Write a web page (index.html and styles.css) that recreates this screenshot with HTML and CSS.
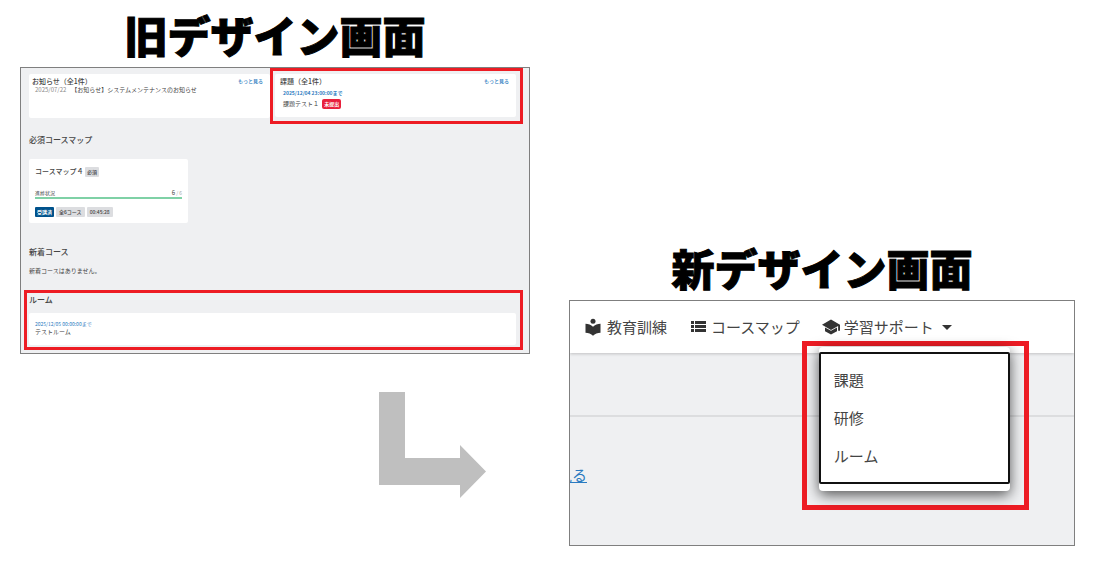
FILE: index.html
```html
<!DOCTYPE html>
<html lang="ja">
<head>
  <meta charset="UTF-8">
  <meta name="viewport" content="width=device-width, initial-scale=1.0">
  <title>旧デザイン画面 / 新デザイン画面</title>
  <link rel="stylesheet" href="styles.css">
</head>
<body>
  <main class="compare">

    <!-- 旧デザイン -->
    <section class="side">
      <h1 class="title">旧デザイン画面</h1>
      <div class="screen old">
        <div class="top-row">
          <div class="top-cell">
            <div class="card notice">
              <div class="card-head">
                <h2>お知らせ（全1件）</h2>
                <a href="#">もっと見る</a>
              </div>
              <p class="news"><time>2025/07/22</time><span>【お知らせ】システムメンテナンスのお知らせ</span></p>
            </div>
          </div>
          <div class="top-cell marked">
            <div class="card notice">
              <div class="card-head">
                <h2>課題（全1件）</h2>
                <a href="#">もっと見る</a>
              </div>
              <p class="limit">2025/12/04 23:00:00まで</p>
              <p class="task">課題テスト１ <span class="tag tag-red">未提出</span></p>
            </div>
          </div>
        </div>

        <section class="block">
          <h2 class="block-title">必須コースマップ</h2>
          <div class="card course">
            <h3>コースマップ４ <span class="tag">必須</span></h3>
            <div class="progress-head">
              <span>進捗状況</span>
              <span class="count">6<small> / 6</small></span>
            </div>
            <div class="bar"></div>
            <div class="tags">
              <span class="tag tag-blue">受講済</span>
              <span class="tag">全6コース</span>
              <span class="tag">00:45:28</span>
            </div>
          </div>
        </section>

        <section class="block new-course">
          <h2 class="block-title">新着コース</h2>
          <p>新着コースはありません。</p>
        </section>

        <section class="room marked">
          <h2 class="block-title">ルーム</h2>
          <div class="card">
            <p class="room-limit">2025/12/05 00:00:00まで</p>
            <p>テストルーム</p>
          </div>
        </section>
      </div>

      <svg class="arrow" width="108" height="108" viewBox="0 0 108 108" aria-hidden="true">
        <path fill="#bfbfbf" d="M0 0h26v66h55V53l26 26.500L81 106V93H0z"/>
      </svg>
    </section>

    <!-- 新デザイン -->
    <section class="side side-new">
      <h1 class="title">新デザイン画面</h1>
      <div class="screen new">
        <nav class="nav">
          <a href="#">
            <svg width="20" height="20" viewBox="0 0 24 24"><path d="M12 11.550C9.640 9.350 6.480 8 3 8v11c3.480 0 6.640 1.350 9 3.550 2.360-2.190 5.520-3.550 9-3.550V8c-3.480 0-6.640 1.350-9 3.550z"/><circle cx="12" cy="5" r="3"/></svg>
            教育訓練
          </a>
          <a href="#">
            <svg width="18" height="18" viewBox="0 0 18 18"><path d="M2 3h3v3H2zM6 3h11v3H6zM2 7h3v3H2zM6 7h11v3H6zM2 11h3v3H2zM6 11h11v3H6z"/></svg>
            コースマップ
          </a>
          <div class="nav-item">
            <button type="button" class="nav-button" aria-expanded="true">
              <svg width="18" height="18" viewBox="0 0 24 24"><path d="M4 12.500v5L12 22l8-4.500v-5L12 17zM12 2L0 9l12 7 9.500-5.500V17H24V9z"/></svg>
              学習サポート
              <span class="caret"></span>
            </button>
            <div class="menu-mark">
              <div class="menu">
                <ul>
                  <li><a href="#">課題</a></li>
                  <li><a href="#">研修</a></li>
                  <li><a href="#">ルーム</a></li>
                </ul>
              </div>
            </div>
          </div>
        </nav>
        <div class="page">
          <hr>
          <a class="more" href="#">見る</a>
        </div>
      </div>
    </section>

  </main>
</body>
</html>
```

FILE: styles.css
```css
* {
  box-sizing: border-box;
}

body {
  margin: 0;
  background: #fff;
  color: #444;
  font-family: "Noto Sans CJK JP", sans-serif;
}

h1, h2, h3, p, ul {
  margin: 0;
  padding: 0;
}

a {
  color: #2a7ac0;
  text-decoration: none;
}

.compare {
  display: grid;
  grid-template-columns: 510fr 506fr;
  gap: 39px;
  padding: 0 21px 0 20px;
}

.side {
  padding-top: 4px;
}

.side-new {
  padding-top: 237px;
}

.title {
  padding-bottom: 3px;
  text-align: center;
  font-size: 43px;
  font-weight: 900;
  line-height: 60px;
  color: #000;
  -webkit-text-stroke: 1px #000;
}

.screen {
  border: 1px solid #7f7f7f;
  background: #eff0f2;
  overflow: hidden;
}

.marked {
  border: 3px solid #ed1c24;
}

.card {
  background: #fff;
  border-radius: 2px;
}

/* old screen */
.old {
  padding: 0 7px 3px 3px;
  font-size: 6px;
  line-height: 8px;
}

.top-row {
  display: flex;
}

.top-cell {
  flex: 1;
  padding: 6px 0 6px 5px;
}

.top-cell.marked {
  flex: 0 0 253px;
  margin-right: -1px;
  padding: 3px 4px 4px 2px;
}

.notice {
  height: 100%;
  min-height: 43px;
  padding: 3px 7px 3px 3px;
}

.marked .notice {
  padding-left: 5px;
}

.card-head {
  display: flex;
  justify-content: space-between;
}

.card-head h2 {
  font-size: 7px;
  font-weight: 500;
  line-height: 9px;
}

.card-head a {
  font-size: 5px;
  font-weight: 500;
}

.news {
  padding-left: 3px;
}

.news time {
  margin-right: 5px;
  color: #888;
}

.limit {
  padding: 3px 0 0 3px;
  font-size: 5px;
  font-weight: 700;
  color: #2a7ac0;
}

.task {
  padding: 2px 0 0 3px;
  line-height: 10px;
}

.tag {
  display: inline-block;
  padding: 0 2px;
  border-radius: 1px;
  background: #dcdde0;
  font-size: 5px;
  font-weight: 500;
  line-height: 10px;
  vertical-align: middle;
}

.tag-red {
  margin-left: 2px;
  border-radius: 2px;
  background: #e8203c;
  color: #fff;
  font-weight: 700;
}

.tag-blue {
  background: #00528c;
  color: #fff;
  font-weight: 700;
}

.block {
  padding: 10px 5px 0;
}

.block-title {
  font-size: 8px;
  font-weight: 500;
  line-height: 12px;
}

.course {
  width: 159px;
  margin-top: 13px;
  padding: 7px 6px 6px;
}

.course h3 {
  font-size: 7px;
  font-weight: 500;
  line-height: 10px;
}

.progress-head {
  display: flex;
  justify-content: space-between;
  margin-top: 12px;
  font-size: 5px;
}

.count {
  font-size: 6px;
}

.count small {
  font-size: 5px;
  color: #aaa;
}

.bar {
  height: 2px;
  background: #7fd1a6;
}

.tags {
  display: flex;
  gap: 2px;
  margin-top: 8px;
}

.tags .tag {
  padding: 0 3px;
}

.tags .tag-blue {
  padding: 0 2px;
}

.new-course {
  padding: 23px 5px 0;
}

.new-course p {
  margin-top: 9px;
}

.room {
  margin: 15px -1px 0 0;
  padding: 1px 4px 2px 2px;
}

.room .card {
  margin-top: 7px;
  padding: 7px 6px 9px;
}

.room-limit {
  font-size: 5px;
  color: #2a7ac0;
}

.arrow {
  display: block;
  margin: 38px 0 0 359px;
}

/* new screen */
.new {
  font-size: 15px;
  line-height: 22px;
}

.nav {
  position: relative;
  z-index: 1;
  display: flex;
  height: 52px;
  padding-left: 13px;
  background: #fff;
  box-shadow: 0 1px 3px rgba(0, 0, 0, 0.2);
}

.nav > a,
.nav-button {
  display: flex;
  align-items: center;
  gap: 4px;
  color: #444;
}

.nav > a {
  margin-right: 22px;
}

.nav svg {
  fill: #333;
}

.nav-item {
  position: relative;
}

.nav-button {
  height: 52px;
  padding: 0;
  border: 0;
  background: none;
  font: inherit;
}

.caret {
  margin-left: 4px;
  border: 5px solid transparent;
  border-top-color: #333;
  border-bottom: 0;
}

.menu-mark {
  position: absolute;
  top: 40px;
  left: -20px;
  width: 227px;
  padding: 1px 14px 14px 12px;
  border: 5px solid #ed1c24;
}

.menu {
  padding: 5px 0 7px;
  border-radius: 4px;
  background: #fff;
  box-shadow: 0 4px 14px rgba(0, 0, 0, 0.65);
}

.menu ul {
  padding: 7px 0;
  border: 2px solid #111;
  border-radius: 2px;
  list-style: none;
}

.menu a {
  display: block;
  padding: 8px 13px;
  color: #444;
}

.page {
  padding: 62px 0 59px;
}

.page hr {
  height: 2px;
  margin: 0 0 47px;
  border: 0;
  background: #dcdddf;
}

.more {
  display: flex;
  justify-content: flex-end;
  width: 17px;
  white-space: nowrap;
  text-decoration: underline;
}
```
